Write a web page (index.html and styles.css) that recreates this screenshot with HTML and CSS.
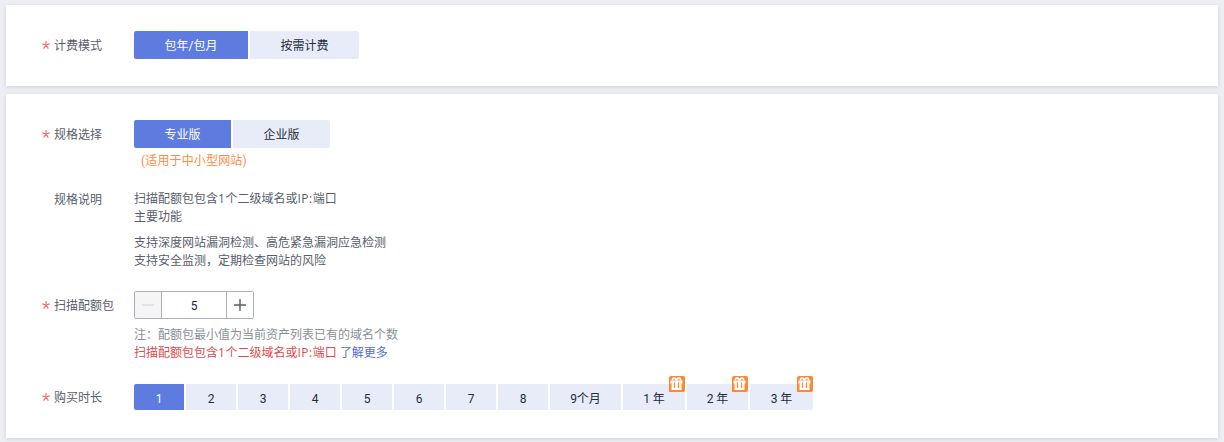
FILE: index.html
```html
<!DOCTYPE html>
<html lang="zh-CN">
<head>
<meta charset="utf-8">
<title>计费模式</title>
<link rel="stylesheet" href="styles.css">
</head>
<body>
<svg class="defs" width="0" height="0">
  <symbol id="gift" viewBox="0 0 16 16">
    <path d="M2 0H14.500Q16 0 16 1.500V14Q16 16 14 16H0V2Q0 0 2 0Z" fill="#ff8833"/>
    <path d="M7.500 4.500C6.500 1 3 1.500 3.500 4.500M7.500 4.500C8.500 1 12 1.500 11.500 4.500" fill="none" stroke="#fff" stroke-width="1.700"/>
    <path d="M1.500 4.500H13.500V7.500H12.500V14H2.500V7.500H1.500Z" fill="#fff"/>
    <path d="M5.500 6.500V12M9.500 6.500V12" stroke="#ff8833" stroke-width="1.200"/>
  </symbol>
  <symbol id="required" viewBox="0 0 8 8">
    <path d="M4 0V4M0.200 2.900L4 4L7.800 2.900M1.700 7.600L4 4L6.300 7.600" fill="none" stroke="#f66f6a" stroke-width="1.200"/>
  </symbol>
</svg>
<main class="page">
  <section class="card card-mode">
    <div class="row">
      <div class="label"><svg class="star"><use href="#required"/></svg><span>计费模式</span></div>
      <div class="segments">
        <button class="seg seg-period active">包年/包月</button>
        <button class="seg seg-demand">按需计费</button>
      </div>
    </div>
  </section>
  <section class="card card-spec">
    <div class="row row-edition">
      <div class="label"><svg class="star"><use href="#required"/></svg><span>规格选择</span></div>
      <div>
        <div class="segments">
          <button class="seg seg-edition active">专业版</button>
          <button class="seg seg-edition">企业版</button>
        </div>
        <p class="hint">(适用于中小型网站)</p>
      </div>
    </div>
    <div class="row row-desc">
      <div class="label label-text"><span>规格说明</span></div>
      <div class="desc">
        <p>扫描配额包包含<span class="latin">1</span>个二级域名或<span class="latin">IP:</span>端口</p>
        <p>主要功能</p>
        <p class="features">支持深度网站漏洞检测、高危紧急漏洞应急检测</p>
        <p>支持安全监测，定期检查网站的风险</p>
      </div>
    </div>
    <div class="row row-quota">
      <div class="label"><svg class="star"><use href="#required"/></svg><span>扫描配额包</span></div>
      <div>
        <div class="stepper">
          <button class="step minus" disabled aria-label="减少"><svg width="13" height="13"><path d="M0 6H12" stroke="#dfe1e6" stroke-width="2"/></svg></button>
          <span class="value">5</span>
          <button class="step plus" aria-label="增加"><svg width="13" height="13"><path d="M0 6H12M6 0V12" stroke="#575d6c" stroke-width="1.400"/></svg></button>
        </div>
        <p class="note">注：配额包最小值为当前资产列表已有的域名个数</p>
        <p class="warning">扫描配额包包含<span class="latin">1</span>个二级域名或<span class="latin">IP:</span>端口 <a class="more">了解更多</a></p>
      </div>
    </div>
    <div class="row row-duration">
      <div class="label"><svg class="star"><use href="#required"/></svg><span>购买时长</span></div>
      <div class="segments durations">
        <button class="seg active">1</button>
        <button class="seg">2</button>
        <button class="seg">3</button>
        <button class="seg">4</button>
        <button class="seg">5</button>
        <button class="seg">6</button>
        <button class="seg">7</button>
        <button class="seg">8</button>
        <button class="seg nine">9个月</button>
        <button class="seg year-one">1 年<svg class="gift"><use href="#gift"/></svg></button>
        <button class="seg year-two">2 年<svg class="gift"><use href="#gift"/></svg></button>
        <button class="seg year-three">3 年<svg class="gift"><use href="#gift"/></svg></button>
      </div>
    </div>
  </section>
</main>
</body>
</html>
```
FILE: styles.css
```css
* { box-sizing: border-box; }
body {
  margin: 0;
  background: #eeeff5;
  color: #575d6c;
  font: 12px/18px Roboto, "Noto Sans CJK SC", sans-serif;
}
p { margin: 0; white-space: nowrap; }
.defs { display: block; }
.page {
  display: flex;
  flex-direction: column;
  gap: 8px;
  height: 442px;
  padding: 5px 6px 4px;
  overflow: hidden;
}
.card {
  background: #fff;
  border-radius: 1px;
  box-shadow: 0 1px 4px rgba(60, 65, 85, .18);
}
.card-mode { height: 81px; padding: 26px 36px; }
.card-spec { height: 344px; padding: 26px 36px; }
.row { display: flex; align-items: flex-start; }
.label {
  display: flex;
  align-items: center;
  flex: 0 0 92px;
  height: 28px;
  gap: 4px;
}
.label span { padding-top: 2px; }
.label-text { height: 18px; padding-left: 12px; }
.star { width: 8px; height: 8px; }
.segments { display: flex; gap: 2px; }
.seg {
  position: relative;
  height: 28px;
  padding: 2px 0 0;
  border: 0;
  background: #e8ecf8;
  color: #252b3a;
  font: inherit;
  line-height: 26px;
  text-align: center;
}
.seg:first-child { border-radius: 2px 0 0 2px; }
.seg:last-child { border-radius: 0 2px 2px 0; }
.seg.active { background: #5e7ce0; color: #fff; }
.seg-period { width: 114px; }
.seg-demand { width: 109px; }
.seg-edition { width: 97px; }
.hint { padding: 4px 0 0 7px; color: #ff8c46; letter-spacing: .15px; }
.row-desc { margin-top: 20px; }
.features { margin-top: 8px; }
.latin { font-family: "Open Sans", "Noto Sans", sans-serif; letter-spacing: .5px; }
.row-quota { margin-top: 21px; }
.stepper {
  display: flex;
  width: 120px;
  height: 28px;
  border: 1px solid #adb0b8;
  border-radius: 2px;
}
.step {
  display: flex;
  align-items: center;
  justify-content: center;
  width: 27px;
  padding: 0;
  border: 0;
  background: #fff;
}
.minus { background: #f5f5f6; border-right: 1px solid #adb0b8; }
.plus { border-left: 1px solid #adb0b8; }
.value { flex: 1; color: #252b3a; line-height: 28px; text-align: center; }
.note { margin-top: 7px; color: #8a8e99; }
.warning { color: #df4a4d; }
.more { color: #526ecc; }
.row-duration { margin-top: 22px; }
.row-duration .label { height: 26px; }
.durations .seg { width: 50px; height: 26px; line-height: 24px; }
.durations .seg { padding-top: 3px; }
.durations .nine { width: 71px; }
.durations .year-one { width: 62px; }
.durations .year-two { width: 61px; }
.durations .year-three { width: 63px; }
.gift { position: absolute; top: -8px; right: 0; width: 16px; height: 16px; }
```
